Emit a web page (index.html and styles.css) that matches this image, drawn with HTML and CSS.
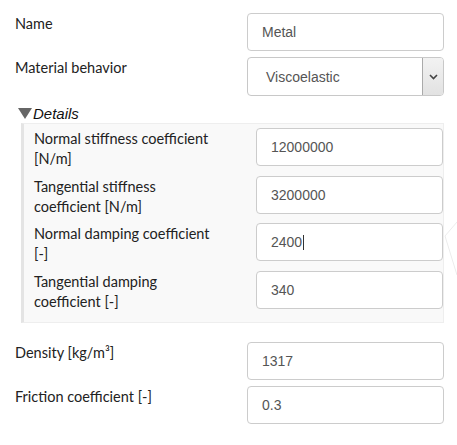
FILE: index.html
```html
<!DOCTYPE html>
<html>
<head>
<meta charset="utf-8">
<link rel="stylesheet" href="styles.css">
</head>
<body>
<div class="form">
  <div class="row">
    <div class="label">Name</div>
    <div class="input">Metal</div>
  </div>
  <div class="row">
    <div class="label">Material behavior</div>
    <div class="select">
      <span class="select-text">Viscoelastic</span>
      <span class="select-btn">
        <svg width="9" height="6" viewBox="0 0 9 6"><path d="M1 1 L4.5 4.5 L8 1" fill="none" stroke="#444" stroke-width="1.6"/></svg>
      </span>
    </div>
  </div>
  <div class="details-head">
    <svg class="tri" width="14" height="11" viewBox="0 0 14 11"><polygon points="0,0 14,0 7,11" fill="#666"/></svg>
    <span class="details-title">Details</span>
  </div>
  <div class="panel">
    <div class="prow">
      <div class="plabel">Normal stiffness coefficient [N/m]</div>
      <div class="input pinput">12000000</div>
    </div>
    <div class="prow">
      <div class="plabel">Tangential stiffness coefficient [N/m]</div>
      <div class="input pinput">3200000</div>
    </div>
    <div class="prow">
      <div class="plabel">Normal damping coefficient [-]</div>
      <div class="input pinput">2400<span class="caret"></span></div>
    </div>
    <div class="prow">
      <div class="plabel">Tangential damping coefficient [-]</div>
      <div class="input pinput">340</div>
    </div>
  </div>
  <div class="row row-after">
    <div class="label">Density [kg/m³]</div>
    <div class="input">1317</div>
  </div>
  <div class="row">
    <div class="label">Friction coefficient [-]</div>
    <div class="input">0.3</div>
  </div>
</div>
<svg class="deco" width="17" height="70" viewBox="0 0 17 70"><path d="M17 2 L5 16 L17 55" fill="none" stroke="#ececec" stroke-width="1"/></svg>
</body>
</html>
```
FILE: styles.css
```css
html, body {
  margin: 0;
  padding: 0;
  background: #ffffff;
}
body {
  position: relative;
  width: 457px;
  height: 445px;
  overflow: hidden;
}
.form {
  padding: 13px 0 0 15px;
  width: 429px;
}
.row {
  display: flex;
  align-items: flex-start;
  margin-bottom: 6px;
}
.label {
  width: 232px;
  padding-top: 1px;
  font-family: Lato, "Liberation Sans", sans-serif;
  font-size: 14.5px;
  line-height: 20px;
  color: #222;
}
.input {
  box-sizing: border-box;
  width: 197px;
  height: 38px;
  border: 1px solid #ccc;
  border-radius: 4px;
  background: #fff;
  padding: 0 14px;
  display: flex;
  align-items: center;
  font-family: "Liberation Sans", Arial, sans-serif;
  font-size: 14px;
  color: #555;
}
.select {
  box-sizing: border-box;
  width: 197px;
  height: 39px;
  border: 1px solid #c8c8c8;
  border-radius: 4px;
  background: #fff;
  display: flex;
  align-items: stretch;
  overflow: hidden;
  font-family: "Liberation Sans", Arial, sans-serif;
  font-size: 14px;
  color: #555;
}
.select-text {
  flex: 1;
  display: flex;
  align-items: center;
  padding-left: 18px;
}
.select-btn {
  width: 20px;
  border-left: 1px solid #aaa;
  background: linear-gradient(#f2f2f2, #e2e2e2);
  display: flex;
  align-items: center;
  justify-content: center;
}
.details-head {
  display: flex;
  align-items: center;
  height: 20px;
  margin-top: 7px;
  padding-left: 3px;
}
.tri {
  display: block;
  margin-right: 1px;
}
.details-title {
  font-family: "Liberation Sans", Arial, sans-serif;
  font-style: italic;
  font-size: 15px;
  color: #111;
}
.panel {
  margin-left: 6px;
  width: 423px;
  box-sizing: border-box;
  background: #f9f9f9;
  border-left: 3px solid #e4e4e4;
  border-top: 1px solid #eeeeee;
  border-right: 1px solid #eeeeee;
  border-bottom: 1px solid #eeeeee;
  padding: 4px 0 3.33px 10px;
}
.prow {
  display: flex;
  align-items: flex-start;
  margin-bottom: 6.67px;
}
.plabel {
  box-sizing: border-box;
  width: 222px;
  padding-right: 34px;
  padding-top: 1px;
  font-family: Lato, "Liberation Sans", sans-serif;
  font-size: 14.5px;
  line-height: 20px;
  color: #222;
}
.pinput {
  width: 187px;
}
.caret {
  display: inline-block;
  width: 1px;
  height: 15px;
  background: #333;
  margin-left: 1px;
}
.row-after {
  margin-top: 19px;
}
.deco {
  position: absolute;
  left: 440px;
  top: 220px;
}
```
